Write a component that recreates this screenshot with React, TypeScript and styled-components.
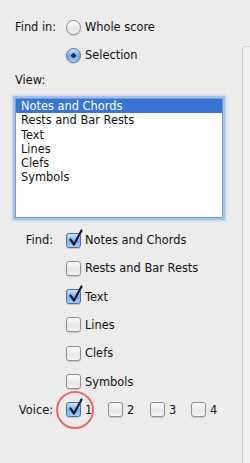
import React from "react";
import styled, { createGlobalStyle } from "styled-components";

// #region styled
const GlobalStyle = createGlobalStyle`
  html, body {
    margin: 0;
    padding: 0;
    background: #ececec;
  }
`;

const Page = styled.div`
  width: 250px;
  height: 463px;
  display: flex;
  background: #ececec;
  font-family: "DejaVu Sans", "Liberation Sans", sans-serif;
  font-size: 11.4px;
  color: #111;
  overflow: hidden;
`;

const Panel = styled.div`
  width: 242px;
  padding: 19px 0 0 15px;
  box-sizing: border-box;
  display: flex;
  flex-direction: column;
`;

const EdgeStrip = styled.div`
  flex: 1;
  margin-top: 46px;
  border-left: 1px solid #cdcdcd;
  border-top: 1px solid #d6d6d6;
  border-top-left-radius: 4px;
  background: #efefef;
`;

const Row = styled.div<{ $gap?: number }>`
  display: grid;
  grid-template-columns: 38px 1fr;
  column-gap: 13px;
  align-items: center;
  height: 16px;
  margin-top: ${p => p.$gap ?? 0}px;
`;

const Label = styled.span<{ $align?: "start" | "end" }>`
  justify-self: ${p => p.$align ?? "end"};
  white-space: nowrap;
`;

const Option = styled.label`
  display: flex;
  align-items: center;
  gap: 4px;
  white-space: nowrap;
`;

const Radio = styled.span<{ $on?: boolean }>`
  width: 13px;
  height: 13px;
  flex: none;
  border-radius: 50%;
  border: 1px solid ${p => (p.$on ? "#4a6fa0" : "#8d8d8d")};
  background: ${p =>
    p.$on
      ? "radial-gradient(circle at 50% 50%, #1c2a44 0 2px, transparent 2.5px), linear-gradient(#cfe3fa, #6ea6e8 55%, #a9d0f7)"
      : "linear-gradient(#ffffff, #e4e4e4 60%, #f4f4f4)"};
  box-shadow: 0 1px 1px rgba(0, 0, 0, 0.15);
`;

const ViewLabel = styled.div`
  margin-top: 9px;
  height: 16px;
  line-height: 16px;
`;

const ListBox = styled.ul`
  list-style: none;
  margin: 10px 0 0;
  padding: 0;
  width: 208px;
  height: 120px;
  box-sizing: border-box;
  background: #fff;
  border: 1px solid #7c9cc6;
  box-shadow: 0 0 0 2px #9ec3ee, 0 0 2px 3px rgba(120, 170, 230, 0.4);
`;

const ListItem = styled.li<{ $selected?: boolean }>`
  height: 14.3px;
  line-height: 14.3px;
  padding-left: 5px;
  background: ${p => (p.$selected ? "#3875d7" : "transparent")};
  color: ${p => (p.$selected ? "#fff" : "#111")};
  white-space: nowrap;
`;

const FindList = styled.div`
  margin-top: 14px;
  display: flex;
  flex-direction: column;
  gap: 12.33px;
`;

const Box = styled.span<{ $on?: boolean }>`
  position: relative;
  width: 13px;
  height: 13px;
  flex: none;
  border-radius: 3px;
  border: 1px solid ${p => (p.$on ? "#4f6f9c" : "#8e8e8e")};
  background: ${p =>
    p.$on
      ? "linear-gradient(#d2e5fb, #76aeee 55%, #a8cff6)"
      : "linear-gradient(#ffffff, #e6e6e6 60%, #f5f5f5)"};
  box-shadow: 0 1px 1px rgba(0, 0, 0, 0.15);
`;

const Tick = styled.svg`
  position: absolute;
  left: 1px;
  top: -4px;
  width: 15px;
  height: 17px;
  overflow: visible;
`;

const Voices = styled.div`
  display: flex;
  align-items: center;
`;

const VoiceOption = styled(Option)<{ $width: number }>`
  width: ${p => p.$width}px;
  position: relative;
`;

const Highlight = styled.span`
  position: absolute;
  left: -10px;
  top: -11px;
  width: 38px;
  height: 38px;
  border-radius: 50%;
  border: 2px solid #ec6a60;
  box-sizing: border-box;
  pointer-events: none;
`;
// #endregion

const Check: React.FC<{ on?: boolean }> = ({ on }) => (
  <Box $on={on}>
    {on && (
      <Tick viewBox="0 0 15 17">
        <path
          d="M2.5 9.5 L6 14.5 L13.5 0.5"
          fill="none"
          stroke="#151c3a"
          strokeWidth="2.2"
          strokeLinecap="round"
          strokeLinejoin="round"
        />
      </Tick>
    )}
  </Box>
);

const viewItems = [
  "Notes and Chords",
  "Rests and Bar Rests",
  "Text",
  "Lines",
  "Clefs",
  "Symbols",
];

const findItems = [
  { name: "Notes and Chords", on: true },
  { name: "Rests and Bar Rests", on: false },
  { name: "Text", on: true },
  { name: "Lines", on: false },
  { name: "Clefs", on: false },
  { name: "Symbols", on: false },
];

const voices = [
  { n: 1, on: true, w: 42 },
  { n: 2, on: false, w: 42 },
  { n: 3, on: false, w: 41 },
  { n: 4, on: false, w: 30 },
];

const App: React.FC = () => (
  <Page>
    <GlobalStyle />
    <Panel>
      <Row>
        <Label $align="start">Find in:</Label>
        <Option>
          <Radio />
          Whole score
        </Option>
      </Row>
      <Row $gap={12}>
        <span />
        <Option>
          <Radio $on />
          Selection
        </Option>
      </Row>

      <ViewLabel>View:</ViewLabel>
      <ListBox>
        {viewItems.map((item, i) => (
          <ListItem key={item} $selected={i === 0}>
            {item}
          </ListItem>
        ))}
      </ListBox>

      <FindList>
        {findItems.map((item, i) => (
          <Row key={item.name}>
            <Label>{i === 0 ? "Find:" : ""}</Label>
            <Option>
              <Check on={item.on} />
              {item.name}
            </Option>
          </Row>
        ))}
        <Row>
          <Label>Voice:</Label>
          <Voices>
            {voices.map(v => (
              <VoiceOption key={v.n} $width={v.w}>
                {v.n === 1 && <Highlight />}
                <Check on={v.on} />
                {v.n}
              </VoiceOption>
            ))}
          </Voices>
        </Row>
      </FindList>
    </Panel>
    <EdgeStrip />
  </Page>
);

export default App;
